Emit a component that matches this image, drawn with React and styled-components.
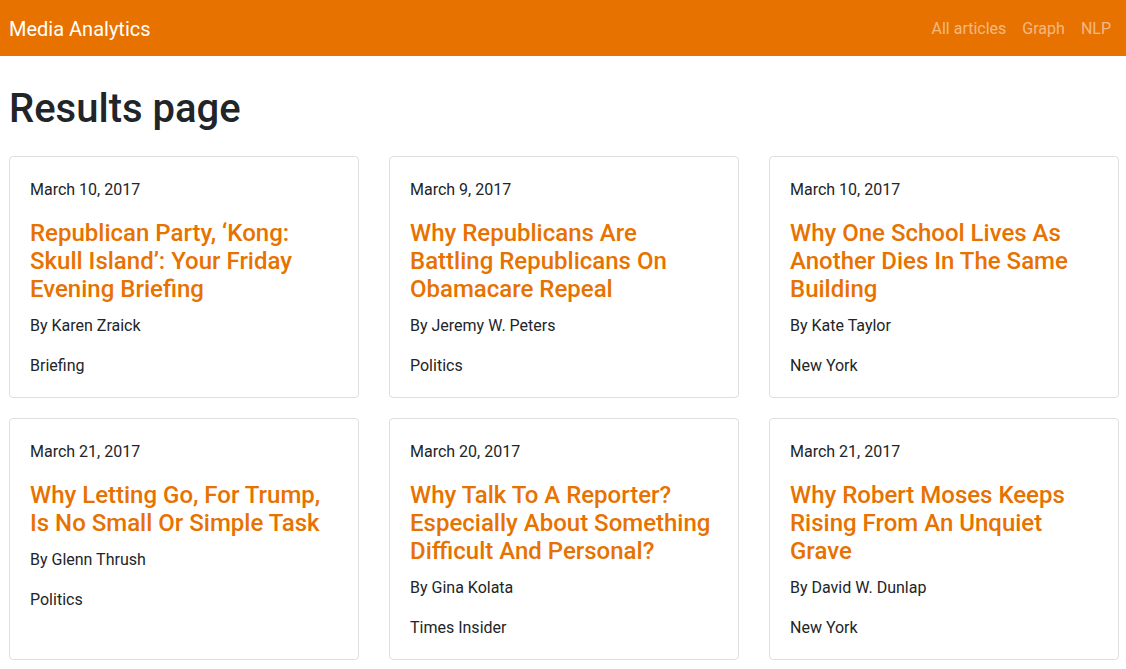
import React from "react";
import styled, { createGlobalStyle } from "styled-components";

const GlobalStyle = createGlobalStyle`
  body {
    margin: 0;
    background: #fff;
    color: #212529;
    font-family: Roboto, "Noto Sans", sans-serif;
    font-size: 16px;
    line-height: 1.5;
  }
  * {
    box-sizing: border-box;
  }
`;

const Navbar = styled.nav`
  height: 56px;
  background: #e77200;
  display: flex;
  align-items: center;
  justify-content: space-between;
  padding: 0 9px;
`;

const Brand = styled.a`
  color: #fff;
  font-size: 20px;
  line-height: 30px;
  padding-top: 2px;
  text-decoration: none;
`;

const NavLinks = styled.div`
  display: flex;
  gap: 16px;
  padding: 2px 6px 0 0;
`;

const NavLink = styled.a`
  color: rgba(255, 255, 255, 0.5);
  font-size: 16px;
  text-decoration: none;
`;

const Main = styled.main`
  padding: 29px 0 0 9px;
`;

const PageTitle = styled.h1`
  margin: 0 0 23px;
  font-size: 40px;
  font-weight: 500;
  line-height: 48px;
`;

const CardGrid = styled.div`
  display: grid;
  grid-template-columns: repeat(3, 350px);
  column-gap: 30px;
  row-gap: 20px;
`;

const Card = styled.div`
  border: 1px solid rgba(0, 0, 0, 0.125);
  border-radius: 4px;
  padding: 21px 20px 19px;
  display: flex;
  flex-direction: column;
`;

const CardText = styled.p`
  margin: 0 0 16px;
  &:first-child {
    margin-bottom: 17px;
  }
  &:last-child {
    margin-bottom: 0;
  }
`;

const CardTitle = styled.h4`
  margin: 0 0 11px;
  color: #e77200;
  font-size: 24px;
  font-weight: 500;
  line-height: 28px;
`;

const articles = [
  {
    date: "March 10, 2017",
    title: "Republican Party, ‘Kong: Skull Island’: Your Friday Evening Briefing",
    author: "By Karen Zraick",
    section: "Briefing",
  },
  {
    date: "March 9, 2017",
    title: "Why Republicans Are Battling Republicans On Obamacare Repeal",
    author: "By Jeremy W. Peters",
    section: "Politics",
  },
  {
    date: "March 10, 2017",
    title: "Why One School Lives As Another Dies In The Same Building",
    author: "By Kate Taylor",
    section: "New York",
  },
  {
    date: "March 21, 2017",
    title: "Why Letting Go, For Trump, Is No Small Or Simple Task",
    author: "By Glenn Thrush",
    section: "Politics",
  },
  {
    date: "March 20, 2017",
    title: "Why Talk To A Reporter? Especially About Something Difficult And Personal?",
    author: "By Gina Kolata",
    section: "Times Insider",
  },
  {
    date: "March 21, 2017",
    title: "Why Robert Moses Keeps Rising From An Unquiet Grave",
    author: "By David W. Dunlap",
    section: "New York",
  },
];

export default function App() {
  return (
    <>
      <GlobalStyle />
      <Navbar>
        <Brand href="#">Media Analytics</Brand>
        <NavLinks>
          <NavLink href="#">All articles</NavLink>
          <NavLink href="#">Graph</NavLink>
          <NavLink href="#">NLP</NavLink>
        </NavLinks>
      </Navbar>
      <Main>
        <PageTitle>Results page</PageTitle>
        <CardGrid>
          {articles.map((a, i) => (
            <Card key={i}>
              <CardText>{a.date}</CardText>
              <CardTitle>{a.title}</CardTitle>
              <CardText>{a.author}</CardText>
              <CardText>{a.section}</CardText>
            </Card>
          ))}
        </CardGrid>
      </Main>
    </>
  );
}
